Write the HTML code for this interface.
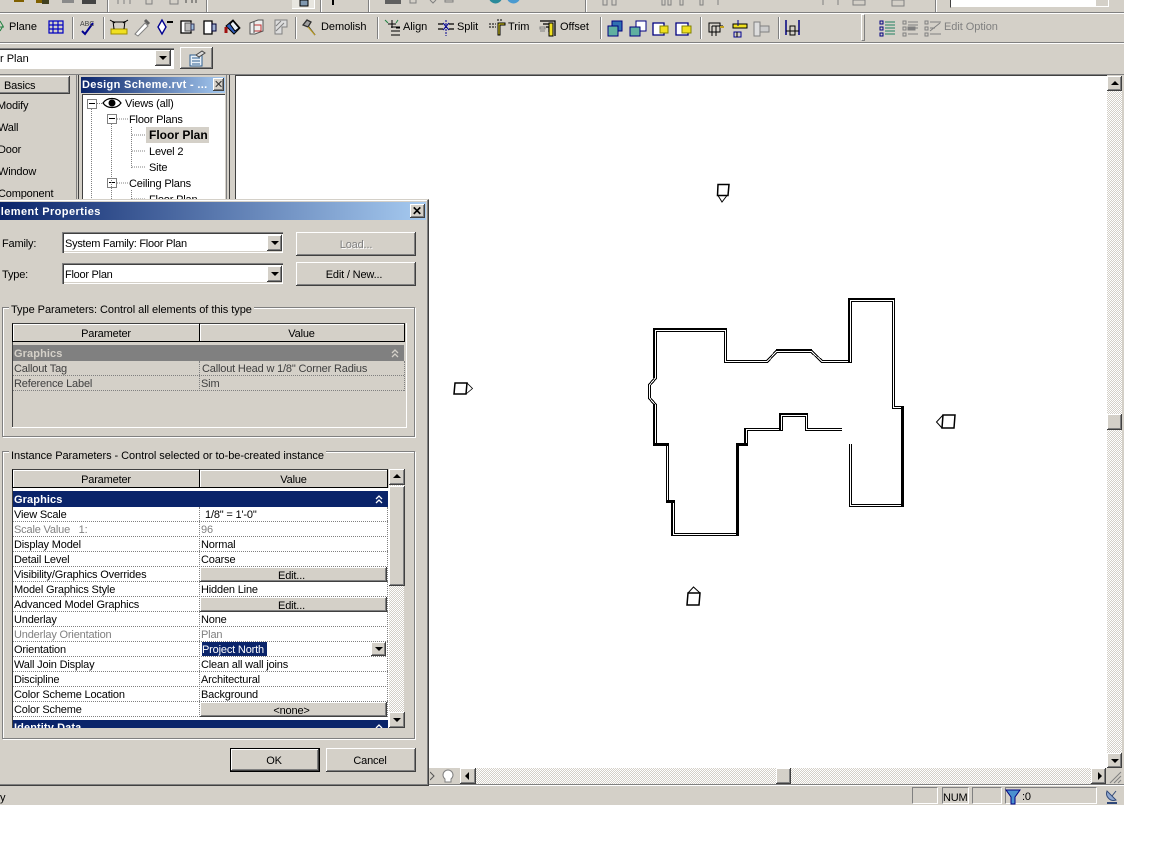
<!DOCTYPE html>
<html><head><meta charset="utf-8"><title>Element Properties</title>
<style>
html,body{margin:0;padding:0;background:#fff;width:1152px;height:864px;overflow:hidden}
div,span{position:absolute;box-sizing:border-box}
#app{left:0;top:0;width:1124px;height:805px;background:#d4d0c8;overflow:hidden}
.t{white-space:nowrap;font:11px/14px "Liberation Sans",sans-serif;color:#000;letter-spacing:-.17px;margin-top:1px}
.tb{letter-spacing:-.05px;margin-top:0;top:20px}
.lg{letter-spacing:-.05px}
.g{color:#808080}
.b{font-weight:bold;letter-spacing:.1px;margin-top:0}
.r{background:#d4d0c8;box-shadow:inset -1px -1px #404040,inset 1px 1px #fff,inset -2px -2px #808080}
.s{background:#fff;box-shadow:inset 1px 1px #808080,inset 2px 2px #404040,inset -1px -1px #fff,inset -2px -2px #d4d0c8}
.db::after{content:"";position:absolute;left:50%;top:50%;margin:-2px 0 0 -4px;border:4px solid transparent;border-top:4px solid #000;border-bottom:0}
.up::after{content:"";position:absolute;left:50%;top:50%;margin:-3px 0 0 -4px;border:4px solid transparent;border-bottom:4px solid #000;border-top:0}
.lf::after{content:"";position:absolute;left:50%;top:50%;margin:-4px 0 0 -3px;border:4px solid transparent;border-right:4px solid #000;border-left:0}
.rt::after{content:"";position:absolute;left:50%;top:50%;margin:-4px 0 0 -1px;border:4px solid transparent;border-left:4px solid #000;border-right:0}
.h{background:conic-gradient(#d4d0c8 25%,#fff 0 50%,#d4d0c8 0 75%,#fff 0);background-size:2px 2px}
.sep{width:2px;border-left:1px solid #808080;border-right:1px solid #fff}
.gb{border:1px solid #808080;box-shadow:1px 1px #fff,inset 1px 1px #fff}
.c{text-align:center}
.dl{border-bottom:1px dotted #808080;height:1px}
.dv{border-left:1px dotted #808080;width:1px}
.ex{width:10px;height:10px;border:1px solid #808080;background:#fff}
.ex::after{content:"";position:absolute;left:1px;top:3px;width:6px;height:1px;background:#000}
.hd{height:19px;background:#d4d0c8;border:1px solid #000;border-top-color:#404040;box-shadow:inset 1px 1px #fff}
</style></head><body>
<div id="app">
<!-- toolbar lines -->
<div style="left:0;top:12px;width:1124px;height:2px;border-top:1px solid #808080;border-bottom:1px solid #fff"></div>
<div style="left:0;top:42px;width:1124px;height:2px;border-top:1px solid #808080;border-bottom:1px solid #fff"></div>
<div style="left:0;top:74px;width:1124px;height:1px;background:#808080"></div>
<!-- row 1 seps -->
<div class="sep" style="left:107px;top:0;height:12px"></div>
<div class="sep" style="left:206px;top:0;height:12px"></div>
<div class="sep" style="left:320px;top:0;height:12px"></div>
<div class="sep" style="left:368px;top:0;height:12px"></div>
<div class="sep" style="left:585px;top:0;height:12px"></div>
<div class="sep" style="left:935px;top:0;height:12px"></div>
<div style="left:950px;top:0;width:159px;height:8px;background:#fff;border-bottom:1px solid #d4d0c8;border-left:1px solid #404040"></div>
<div style="left:1096px;top:0;width:12px;height:6px;background:#d4d0c8"></div>
<div style="left:292px;top:0;width:23px;height:9px;background:#e8e6e0;border-right:1px solid #fff;border-bottom:1px solid #fff"></div>
<!-- row 2 seps -->
<div class="sep" style="left:72px;top:17px;height:22px"></div>
<div class="sep" style="left:103px;top:17px;height:22px"></div>
<div class="sep" style="left:295px;top:17px;height:22px"></div>
<div class="sep" style="left:377px;top:17px;height:22px"></div>
<div class="sep" style="left:600px;top:17px;height:22px"></div>
<div class="sep" style="left:700px;top:17px;height:22px"></div>
<div class="sep" style="left:778px;top:17px;height:22px"></div>
<div style="left:861px;top:14px;width:4px;height:27px;border:1px solid #808080;border-left-color:#fff;border-top-color:#fff"></div>
<!-- toolbar text -->
<span class="t tb" style="left:9px">Plane</span>
<span class="t tb" style="left:321px">Demolish</span>
<span class="t tb" style="left:403px">Align</span>
<span class="t tb" style="left:457px">Split</span>
<span class="t tb" style="left:508px">Trim</span>
<span class="t tb" style="left:560px">Offset</span>
<span class="t tb g" style="left:944px">Edit Option</span>
<!-- toolbar icons -->
<svg width="1124" height="44" style="position:absolute;left:0;top:0" fill="none" stroke="#000">
<!-- row 1 stubs -->
<path d="M14 0h10v2h-10zM36 0h6v3h-6z" fill="#806000" stroke="none"/>
<path d="M42 0h7v4h-7z" fill="#404020" stroke="none"/>
<path d="M62 0h12v3h-12z" fill="#8a8a8a" stroke="none"/>
<path d="M82 0h14v4h-14z" fill="#444" stroke="none"/>
<path d="M118 0v4M124 0v4M130 0v4M146 0v4h6V0M170 0v4h8V0" stroke="#808080"/>
<path d="M186 0v3M192 0v3M196 0v3" stroke="#444"/>
<path d="M300 0h8v6h-8z" fill="#8098b0" stroke="#000"/>
<path d="M333 0v5" stroke="#000" stroke-width="2"/>
<path d="M385 0h16v4h-16z" fill="#606060" stroke="none"/>
<path d="M410 0v3h6V0M430 0l3 3 3-3M445 0h8v2h-8z" stroke="#808080"/>
<path d="M490 0c3 4 8 4 11 0" fill="#2a8a9a" stroke="#2a8a9a"/><path d="M508 0c3 4 8 4 11 0" fill="#4a9ad0" stroke="#4a9ad0"/>
<path d="M603 0v5h4V0M612 0v5h4V0M662 0v5h3V0M668 0v5h3V0M680 0v5h3V0M700 0v5h3V0M718 0v5M823 0v5M838 0v5M853 0h12v5h-12zM892 0h12v6h-12z" stroke="#808080"/>
<!-- plane star -->
<path d="M0 21l3 5-3 5M0 27h4" stroke="#208040"/>
<!-- grid -->
<path d="M49 21h14v12h-14zM49 25h14M49 29h14M53 21v12M58 21v12" stroke="#0000c0" stroke-width="1.2"/>
<!-- spell -->
<path d="M82 31l3 3 8-11" stroke="#000090" stroke-width="2"/>
<text x="80" y="26" font-family="Liberation Sans" font-size="7" fill="#444" stroke="none">ABC</text>
<!-- ruler -->
<path d="M111 29h16v5h-16z" fill="#f0e020" stroke="#a09000"/>
<path d="M113 21l1 8M125 21l-1 8M113 22h12" stroke="#000"/>
<path d="M110 20l5 3M128 20l-5 3" stroke="#000"/>
<!-- eyedropper -->
<path d="M135 34l10-11 3 3-10 10z" fill="#fff" stroke="#808080"/><path d="M145 20l4 4" stroke="#606060" stroke-width="3"/>
<!-- pen nib -->
<path d="M162 20l-4 7 4 7 4-7z" fill="#fff" stroke="#000090" stroke-width="1.4"/><path d="M167 21h6v2h-6z" fill="#000" stroke="none"/>
<!-- door/wall -->
<path d="M181 21h10v12h-10z" fill="#fff" stroke="#000" stroke-width="1.3"/><path d="M185 23h6v8h-6z" fill="#bbb" stroke="#555"/><path d="M191 24h3v6h-3z" fill="#a0c0e0" stroke="#335"/>
<path d="M204 21h8v13h-8z" fill="#fff" stroke="#000" stroke-width="1.3"/><path d="M212 24h4v7h-4z" fill="#a0b0d0" stroke="#003"/>
<!-- paint -->
<path d="M226 26l7-6 7 8-6 6z" fill="#3060c0" stroke="#000"/><path d="M233 21l6 7-4 3-5-7z" fill="#e8f0f8" stroke="#000"/><path d="M226 27v6" stroke="#a01010" stroke-width="3"/>
<!-- box -->
<path d="M250 23l8-3h5v11l-8 3h-5z" fill="#eee" stroke="#555"/><path d="M254 25h7v6h-7z" stroke="#c03030"/><path d="M254 22v11" stroke="#555"/>
<path d="M275 20h12v7h-5v7h-7z" fill="#ddd" stroke="#808080"/><path d="M276 26l5-5M276 31l8-8" stroke="#808080"/>
<!-- hammer -->
<path d="M303 25l4-5 4 2-3 5zM308 26l7 9" stroke="#303030" stroke-width="1.3" fill="#a0a0a0"/><path d="M308 27l7 8" stroke="#c0a020"/>
<!-- align -->
<path d="M388 24h8M392 20v8M396 28h4" stroke="#000"/><path d="M391 27h9M391 31h9M391 35h9" stroke="#000"/><path d="M385 20l3 3M398 20l-2 3" stroke="#208040"/>
<!-- split -->
<path d="M438 24h5M438 29h5M449 24h5M449 29h5" stroke="#000" stroke-width="1.2"/><path d="M446 20v16" stroke="#000090" stroke-dasharray="2 1"/><path d="M443 23l6 7M449 23l-6 7" stroke="#000090"/>
<!-- trim -->
<path d="M498 23h7v2h-5v10h-2z" fill="#f0e020" stroke="#000"/><path d="M489 24h7M489 27h7M498 19v3M501 19v3" stroke="#000" stroke-dasharray="2 1"/>
<!-- offset -->
<path d="M540 21h15v15M543 24h9v12M546 27h3v5" stroke="#000" stroke-width="1.3"/><path d="M540 27h5v2h-5zM540 31h5" stroke="#808080"/><path d="M549 23h4v13h-4z" fill="#f0e020" stroke="#000"/>
<!-- join -->
<path d="M612 21h10v10h-10z" fill="#3070b0" stroke="#000080"/><path d="M608 26h10v10h-10z" fill="#60b0a0" stroke="#000080"/>
<path d="M636 21h10v10h-10z" fill="#fff" stroke="#000080"/><path d="M630 27h10v9h-10z" fill="#60b0a0" stroke="#000080"/>
<path d="M653 23h11v12h-11z" fill="#fff" stroke="#000080" stroke-width="1.3"/><path d="M660 26h8v7h-8z" fill="#f0e020" stroke="#808000"/>
<path d="M676 23h12v12h-12z" fill="#fff" stroke="#000080" stroke-width="1.3"/><path d="M682 26h9v7h-9z" fill="#f0e020" stroke="#808000"/>
<path d="M709 23h11v9h-11zM712 26h11M712 26v10M716 26v10" stroke="#000"/><path d="M720 27h4" stroke="#c0a020" stroke-width="2"/>
<path d="M733 24h14v4h-14z" fill="#f0e020" stroke="#000"/><path d="M738 20v6M734 32h7v5h-7z" stroke="#000090"/><path d="M737 32v5" stroke="#000"/>
<path d="M754 22h6v14h-6z" fill="#ddd" stroke="#808080"/><path d="M760 26h9v6h-9z" fill="#ccc" stroke="#808080"/>
<path d="M786 20v15M799 20v15" stroke="#000080" stroke-width="1.5"/><path d="M786 31h13M790 26h5v9h-5z" stroke="#000"/>
<!-- edit option -->
<path d="M880 21h3v3h-3zM880 27h3v3h-3zM880 33h3v3h-3z" stroke="#000080"/><path d="M885 22h10M885 25h10M885 28h10M885 31h10M885 34h10" stroke="#208060"/>
<path d="M903 21h3v3h-3zM903 27h3v3h-3zM903 33h3v3h-3zM908 22h10M908 25h10M908 34h10M908 28h10" stroke="#808080"/><path d="M908 27h7v3h-7z" fill="#808080" stroke="#808080"/>
<path d="M925 21h3v3h-3zM925 27h3v3h-3zM925 33h3v3h-3zM930 22h11M930 34h11M930 31l10-8M930 28h5" stroke="#808080"/>
</svg>
<!-- row 3 -->
<div style="left:0;top:48px;width:174px;height:21px;background:#fff;box-shadow:inset 0 1px #808080,inset 0 2px #404040,inset -1px -1px #fff"></div>
<span class="t" style="left:0;top:51px;letter-spacing:0">r Plan</span>
<div class="r db" style="left:155px;top:50px;width:16px;height:16px"></div>
<div class="r" style="left:180px;top:47px;width:33px;height:22px"></div>
<svg width="18" height="18" style="position:absolute;left:188px;top:49px" fill="none"><path d="M2 6h12v11H2z" fill="#e8f0f8" stroke="#306090"/><path d="M4 9h8M4 12h8M4 15h8" stroke="#306090"/><path d="M8 6l6-4 3 2-6 4z" fill="#ddd" stroke="#444"/></svg>
<!-- left panel -->
<div class="r" style="left:-3px;top:76px;width:73px;height:18px"></div>
<span class="t" style="left:4px;top:78px">Basics</span>
<span class="t" style="left:-3px;top:98px">Modify</span>
<span class="t" style="left:-2px;top:120px">Wall</span>
<span class="t" style="left:-2px;top:142px">Door</span>
<span class="t" style="left:-2px;top:164px">Window</span>
<span class="t" style="left:-2px;top:186px">Component</span>
<div style="left:76px;top:75px;width:3px;height:130px;border-left:1px solid #808080;border-right:1px solid #404040"></div>
<div style="left:226px;top:75px;width:4px;height:130px;border-left:1px solid #808080;border-right:1px solid #404040"></div>
<!-- browser -->
<div style="left:81px;top:77px;width:144px;height:16px;background:linear-gradient(90deg,#0a246a,#a6caf0)"></div>
<span class="t b" style="left:82px;top:78px;color:#fff;letter-spacing:.33px">Design Scheme.rvt - ...</span>
<div class="r" style="left:213px;top:78px;width:11px;height:13px"></div>
<span class="t" style="left:214px;top:77px;font-size:11px;color:#333">✕</span>
<div style="left:82px;top:94px;width:143px;height:110px;background:#fff;box-shadow:inset 1px 1px #404040"></div>
<div class="ex" style="left:87px;top:99px"></div>
<div class="ex" style="left:107px;top:114px"></div>
<div class="ex" style="left:107px;top:178px"></div>
<svg width="144" height="110" style="position:absolute;left:82px;top:94px" fill="none" stroke="#808080" stroke-dasharray="1 1">
<path d="M9.500 15v95M15 9.500h6M29.500 30v80M35 25h12M49.500 33v42M50 41h14M50 57h14M50 73h14M35 89h12M49.500 96v14M50 105h14"/>
</svg>
<svg width="20" height="12" style="position:absolute;left:102px;top:97px" fill="none" stroke="#000"><path d="M1 6c4-6 14-6 18 0c-4 6-14 6-18 0z" stroke-width="1.2"/><circle cx="10" cy="6" r="3" fill="#000"/></svg>
<span class="t" style="left:125px;top:96px">Views (all)</span>
<span class="t" style="left:129px;top:112px">Floor Plans</span>
<div style="left:146px;top:127px;width:63px;height:16px;background:#d4d0c8"></div>
<span class="t b" style="left:149px;top:128px;font-size:12px;letter-spacing:0">Floor Plan</span>
<span class="t" style="left:149px;top:144px">Level 2</span>
<span class="t" style="left:149px;top:160px">Site</span>
<span class="t" style="left:129px;top:176px">Ceiling Plans</span>
<span class="t" style="left:149px;top:192px">Floor Plan</span>
<!-- canvas -->
<div style="left:235px;top:75px;width:872px;height:693px;background:#fff;box-shadow:inset 1px 1px #404040"></div>
<svg width="1124" height="805" style="position:absolute;left:0;top:0" fill="none" stroke="#000">
<!-- walls: double line -->
<g shape-rendering="crispEdges" transform="translate(-1 0)">
<path d="M656.500 330.500H726.500V361.500H768L777.500 351.500H812.500L823 361.500H851.500V300.500H894.500V407.500H903.500V505.500H851.500V444M656.500 330.500V378L650.500 385V398L656.500 405V444.500H668.500V501.500H674.500V534.500H738.500V444.500H747.500V429.500H782.500V415.500H807.500V429.500H843" stroke-width="3"/>
<path d="M656.500 330.500H726.500V361.500H768L777.500 351.500H812.500L823 361.500H851.500V300.500H894.500V407.500H903.500V505.500H851.500V444M656.500 330.500V378L650.500 385V398L656.500 405V444.500H668.500V501.500H674.500V534.500H738.500V444.500H747.500V429.500H782.500V415.500H807.500V429.500H843" stroke="#fff" stroke-width="1"/>
<path d="M654 329H728M655 328V378M655 404V445M850 362V298M849 299H896M673 501V536M746 445V428M781 430V414M780 414H809M777 350H813" stroke-width="2"/>
<path d="M903.500 407V507M738.500 536V443M654 444.500H670M737 444.500H749M667 501.500H676" stroke-width="3"/>
</g>
<!-- elevation tags -->
<g stroke-width="1.500">
<path d="M718 184.500H729L728 195.500H717.500z"/><path d="M718 195.500L722 202L727 195.500" stroke-width="1"/>
<path d="M455 383H467L466 394H454z"/><path d="M467 383L472.500 388.500L466 394" stroke-width=".8"/>
<path d="M688 593H700L699 605H687z"/><path d="M688 593L693.500 587L700 593" stroke-width="1"/>
<path d="M943 415H955L954 428H942z"/><path d="M943 415L936.500 422L942 428" stroke-width="1"/>
</g>
</svg>
<!-- v scroll -->
<div class="h" style="left:1107px;top:91px;width:15px;height:662px"></div>
<div class="r up" style="left:1107px;top:76px;width:15px;height:15px"></div>
<div class="r" style="left:1107px;top:414px;width:15px;height:16px"></div>
<div class="r db" style="left:1107px;top:753px;width:15px;height:15px"></div>
<!-- h scroll -->
<div class="h" style="left:476px;top:768px;width:615px;height:16px"></div>
<div class="r lf" style="left:460px;top:768px;width:16px;height:16px"></div>
<div class="r" style="left:776px;top:768px;width:15px;height:16px"></div>
<div class="r rt" style="left:1091px;top:768px;width:15px;height:16px"></div>
<svg width="18" height="18" style="position:absolute;left:1106px;top:768px" fill="none" stroke="#808080"><path d="M15 4L4 15M15 8L8 15M15 12L12 15"/></svg>
<svg width="30" height="16" style="position:absolute;left:430px;top:768px" fill="none"><path d="M0 4l4 4-4 4" stroke="#555"/><path d="M15 11a5 5 0 1 1 6 0v3h-6z" fill="#fff" stroke="#808080"/></svg>
<!-- status -->
<div style="left:0;top:784px;width:1124px;height:2px;border-top:1px solid #808080;border-bottom:1px solid #fff"></div>
<span class="t" style="left:0;top:790px">y</span>
<div style="left:912px;top:787px;width:26px;height:17px;border:1px solid #808080;border-right-color:#fff;border-bottom-color:#fff"></div>
<div style="left:942px;top:787px;width:27px;height:17px;border:1px solid #808080;border-right-color:#fff;border-bottom-color:#fff"></div>
<span class="t" style="left:943px;top:790px">NUM</span>
<div style="left:972px;top:787px;width:30px;height:17px;border:1px solid #808080;border-right-color:#fff;border-bottom-color:#fff"></div>
<div style="left:1005px;top:787px;width:92px;height:17px;border:1px solid #808080;border-right-color:#fff;border-bottom-color:#fff"></div>
<svg width="16" height="16" style="position:absolute;left:1005px;top:789px"><path d="M1 1h14l-5 7v7h-4V8z" fill="#4a90d0" stroke="#000080"/></svg>
<span class="t" style="left:1022px;top:789px">:0</span>
<svg width="16" height="18" style="position:absolute;left:1104px;top:787px" fill="none"><path d="M3 4a7 7 0 0 0 9 9z" fill="#90a8d0" stroke="#304878"/><path d="M8 9l4-5" stroke="#304878"/><path d="M3 16h10" stroke="#304878" stroke-width="2"/></svg>

<!-- DIALOG -->
<div style="left:-4px;top:199px;width:433px;height:587px;background:#d4d0c8;border:1px solid #404040;border-top-color:#d4d0c8;box-shadow:inset -1px -1px #808080,inset 1px 1px #fff"></div>
<div style="left:0;top:202px;width:426px;height:18px;background:linear-gradient(90deg,#0a246a,#a6caf0)"></div>
<span class="t b" style="left:-7px;top:204px;color:#fff;letter-spacing:.42px;margin-top:1px">Element Properties</span>
<div class="r" style="left:410px;top:204px;width:15px;height:14px"></div>
<span class="t b" style="left:412px;top:204px;font-size:12px">✕</span>

<span class="t" style="left:2px;top:236px">Family:</span>
<span class="t" style="left:2px;top:267px">Type:</span>
<div class="s" style="left:62px;top:232px;width:221px;height:21px"></div>
<span class="t" style="left:65px;top:236px;letter-spacing:-.26px">System Family: Floor Plan</span>
<div class="r db" style="left:267px;top:235px;width:15px;height:16px"></div>
<div class="s" style="left:62px;top:263px;width:221px;height:21px"></div>
<span class="t" style="left:65px;top:267px;letter-spacing:-.26px">Floor Plan</span>
<div class="r db" style="left:267px;top:266px;width:15px;height:16px"></div>
<div class="r" style="left:296px;top:232px;width:120px;height:24px"></div>
<span class="t g c" style="left:296px;top:237px;width:120px;text-shadow:1px 1px #fff">Load...</span>
<div class="r" style="left:296px;top:262px;width:120px;height:24px"></div>
<span class="t c" style="left:296px;top:267px;width:116px">Edit / New...</span>

<!-- type group -->
<div class="gb" style="left:2px;top:307px;width:413px;height:130px"></div>
<span class="t lg" style="left:9px;top:302px;background:#d4d0c8;padding:0 2px">Type Parameters: Control all elements of this type</span>
<div style="left:12px;top:323px;width:1px;height:104px;background:#404040"></div>
<div style="left:12px;top:427px;width:395px;height:1px;background:#fff"></div>
<div style="left:406px;top:323px;width:1px;height:105px;background:#fff"></div>
<div class="hd" style="left:12px;top:323px;width:188px"></div>
<div class="hd" style="left:199px;top:323px;width:206px"></div>
<span class="t c" style="left:12px;top:326px;width:188px">Parameter</span>
<span class="t c" style="left:199px;top:326px;width:205px">Value</span>
<div style="left:13px;top:345px;width:391px;height:16px;background:#808080"></div>
<span class="t b" style="left:14px;top:347px;color:#d4d0c8">Graphics</span>
<svg width="8" height="9" style="position:absolute;left:391px;top:349px" fill="none" stroke="#d4d0c8" stroke-width="1.300"><path d="M1 4l3-3 3 3M1 8l3-3 3 3"/></svg>
<div class="dl" style="left:13px;top:375px;width:391px"></div>
<div class="dl" style="left:13px;top:390px;width:391px"></div>
<div class="dv" style="left:199px;top:361px;height:30px"></div>
<div class="dv" style="left:404px;top:361px;height:30px"></div>
<span class="t" style="left:14px;top:361px;color:#404040">Callout Tag</span>
<span class="t" style="left:14px;top:376px;color:#404040">Reference Label</span>
<span class="t" style="left:202px;top:361px;color:#404040">Callout Head w 1/8" Corner Radius</span>
<span class="t" style="left:201px;top:376px;color:#404040">Sim</span>

<!-- instance group -->
<div class="gb" style="left:2px;top:451px;width:413px;height:288px"></div>
<span class="t lg" style="left:9px;top:448px;background:#d4d0c8;padding:0 2px">Instance Parameters - Control selected or to-be-created instance</span>
<div style="left:12px;top:488px;width:377px;height:240px;background:#fff"></div>
<div style="left:12px;top:469px;width:1px;height:259px;background:#404040"></div>
<div class="hd" style="left:12px;top:469px;width:188px"></div>
<div class="hd" style="left:199px;top:469px;width:189px"></div>
<span class="t c" style="left:12px;top:472px;width:188px">Parameter</span>
<span class="t c" style="left:199px;top:472px;width:189px">Value</span>
<div style="left:13px;top:491px;width:375px;height:16px;background:#0a246a"></div>
<span class="t b" style="left:14px;top:493px;color:#fff">Graphics</span>
<svg width="8" height="9" style="position:absolute;left:375px;top:495px" fill="none" stroke="#fff" stroke-width="1.300"><path d="M1 4l3-3 3 3M1 8l3-3 3 3"/></svg>
<div class="dv" style="left:199px;top:507px;height:210px"></div>
<div class="dv" style="left:387px;top:507px;height:210px"></div>
<div class="dl" style="left:13px;top:521px;width:375px"></div>
<div class="dl" style="left:13px;top:536px;width:375px"></div>
<div class="dl" style="left:13px;top:551px;width:375px"></div>
<div class="dl" style="left:13px;top:566px;width:375px"></div>
<div class="dl" style="left:13px;top:581px;width:375px"></div>
<div class="dl" style="left:13px;top:596px;width:375px"></div>
<div class="dl" style="left:13px;top:611px;width:375px"></div>
<div class="dl" style="left:13px;top:626px;width:375px"></div>
<div class="dl" style="left:13px;top:641px;width:375px"></div>
<div class="dl" style="left:13px;top:656px;width:375px"></div>
<div class="dl" style="left:13px;top:671px;width:375px"></div>
<div class="dl" style="left:13px;top:686px;width:375px"></div>
<div class="dl" style="left:13px;top:701px;width:375px"></div>
<div class="dl" style="left:13px;top:716px;width:375px"></div>
<span class="t" style="left:14px;top:507px">View Scale</span>
<span class="t g" style="left:14px;top:522px">Scale Value &nbsp;&nbsp;1:</span>
<span class="t" style="left:14px;top:537px">Display Model</span>
<span class="t" style="left:14px;top:552px">Detail Level</span>
<span class="t" style="left:14px;top:567px">Visibility/Graphics Overrides</span>
<span class="t" style="left:14px;top:582px">Model Graphics Style</span>
<span class="t" style="left:14px;top:597px">Advanced Model Graphics</span>
<span class="t" style="left:14px;top:612px">Underlay</span>
<span class="t g" style="left:14px;top:627px">Underlay Orientation</span>
<span class="t" style="left:14px;top:642px">Orientation</span>
<span class="t" style="left:14px;top:657px">Wall Join Display</span>
<span class="t" style="left:14px;top:672px">Discipline</span>
<span class="t" style="left:14px;top:687px">Color Scheme Location</span>
<span class="t" style="left:14px;top:702px">Color Scheme</span>
<span class="t" style="left:205px;top:507px">1/8" = 1'-0"</span>
<span class="t g" style="left:201px;top:522px">96</span>
<span class="t" style="left:201px;top:537px">Normal</span>
<span class="t" style="left:201px;top:552px">Coarse</span>
<div class="r" style="left:200px;top:567px;width:187px;height:15px"></div>
<span class="t c" style="left:200px;top:568px;width:183px">Edit...</span>
<span class="t" style="left:201px;top:582px">Hidden Line</span>
<div class="r" style="left:200px;top:597px;width:187px;height:15px"></div>
<span class="t c" style="left:200px;top:598px;width:183px">Edit...</span>
<span class="t" style="left:201px;top:612px">None</span>
<span class="t g" style="left:201px;top:627px">Plan</span>
<div style="left:202px;top:642px;width:65px;height:14px;background:#0a246a"></div>
<span class="t" style="left:202px;top:642px;color:#fff">Project North</span>
<div class="r db" style="left:371px;top:642px;width:15px;height:14px"></div>
<span class="t" style="left:201px;top:657px">Clean all wall joins</span>
<span class="t" style="left:201px;top:672px">Architectural</span>
<span class="t" style="left:201px;top:687px">Background</span>
<div class="r" style="left:200px;top:702px;width:187px;height:15px"></div>
<span class="t c" style="left:200px;top:703px;width:183px">&lt;none&gt;</span>
<div style="left:13px;top:720px;width:375px;height:8px;background:#0a246a;overflow:hidden"><span class="t b" style="left:1px;top:1px;color:#fff;line-height:14px">Identity Data</span><svg width="8" height="9" style="position:absolute;left:362px;top:4px" fill="none" stroke="#fff" stroke-width="1.300"><path d="M1 4l3-3 3 3"/></svg></div>
<div class="h" style="left:389px;top:485px;width:15px;height:228px"></div>
<div class="r up" style="left:389px;top:469px;width:16px;height:16px"></div>
<div class="r" style="left:389px;top:486px;width:16px;height:100px"></div>
<div class="r db" style="left:389px;top:712px;width:16px;height:16px"></div>
<div style="left:230px;top:748px;width:90px;height:24px;border:1px solid #000;background:#d4d0c8;box-shadow:inset -1px -1px #404040,inset 1px 1px #fff,inset -2px -2px #808080"></div>
<span class="t c" style="left:230px;top:753px;width:88px">OK</span>
<div class="r" style="left:326px;top:748px;width:90px;height:24px"></div>
<span class="t c" style="left:326px;top:753px;width:88px">Cancel</span>
</div>
</body></html>
